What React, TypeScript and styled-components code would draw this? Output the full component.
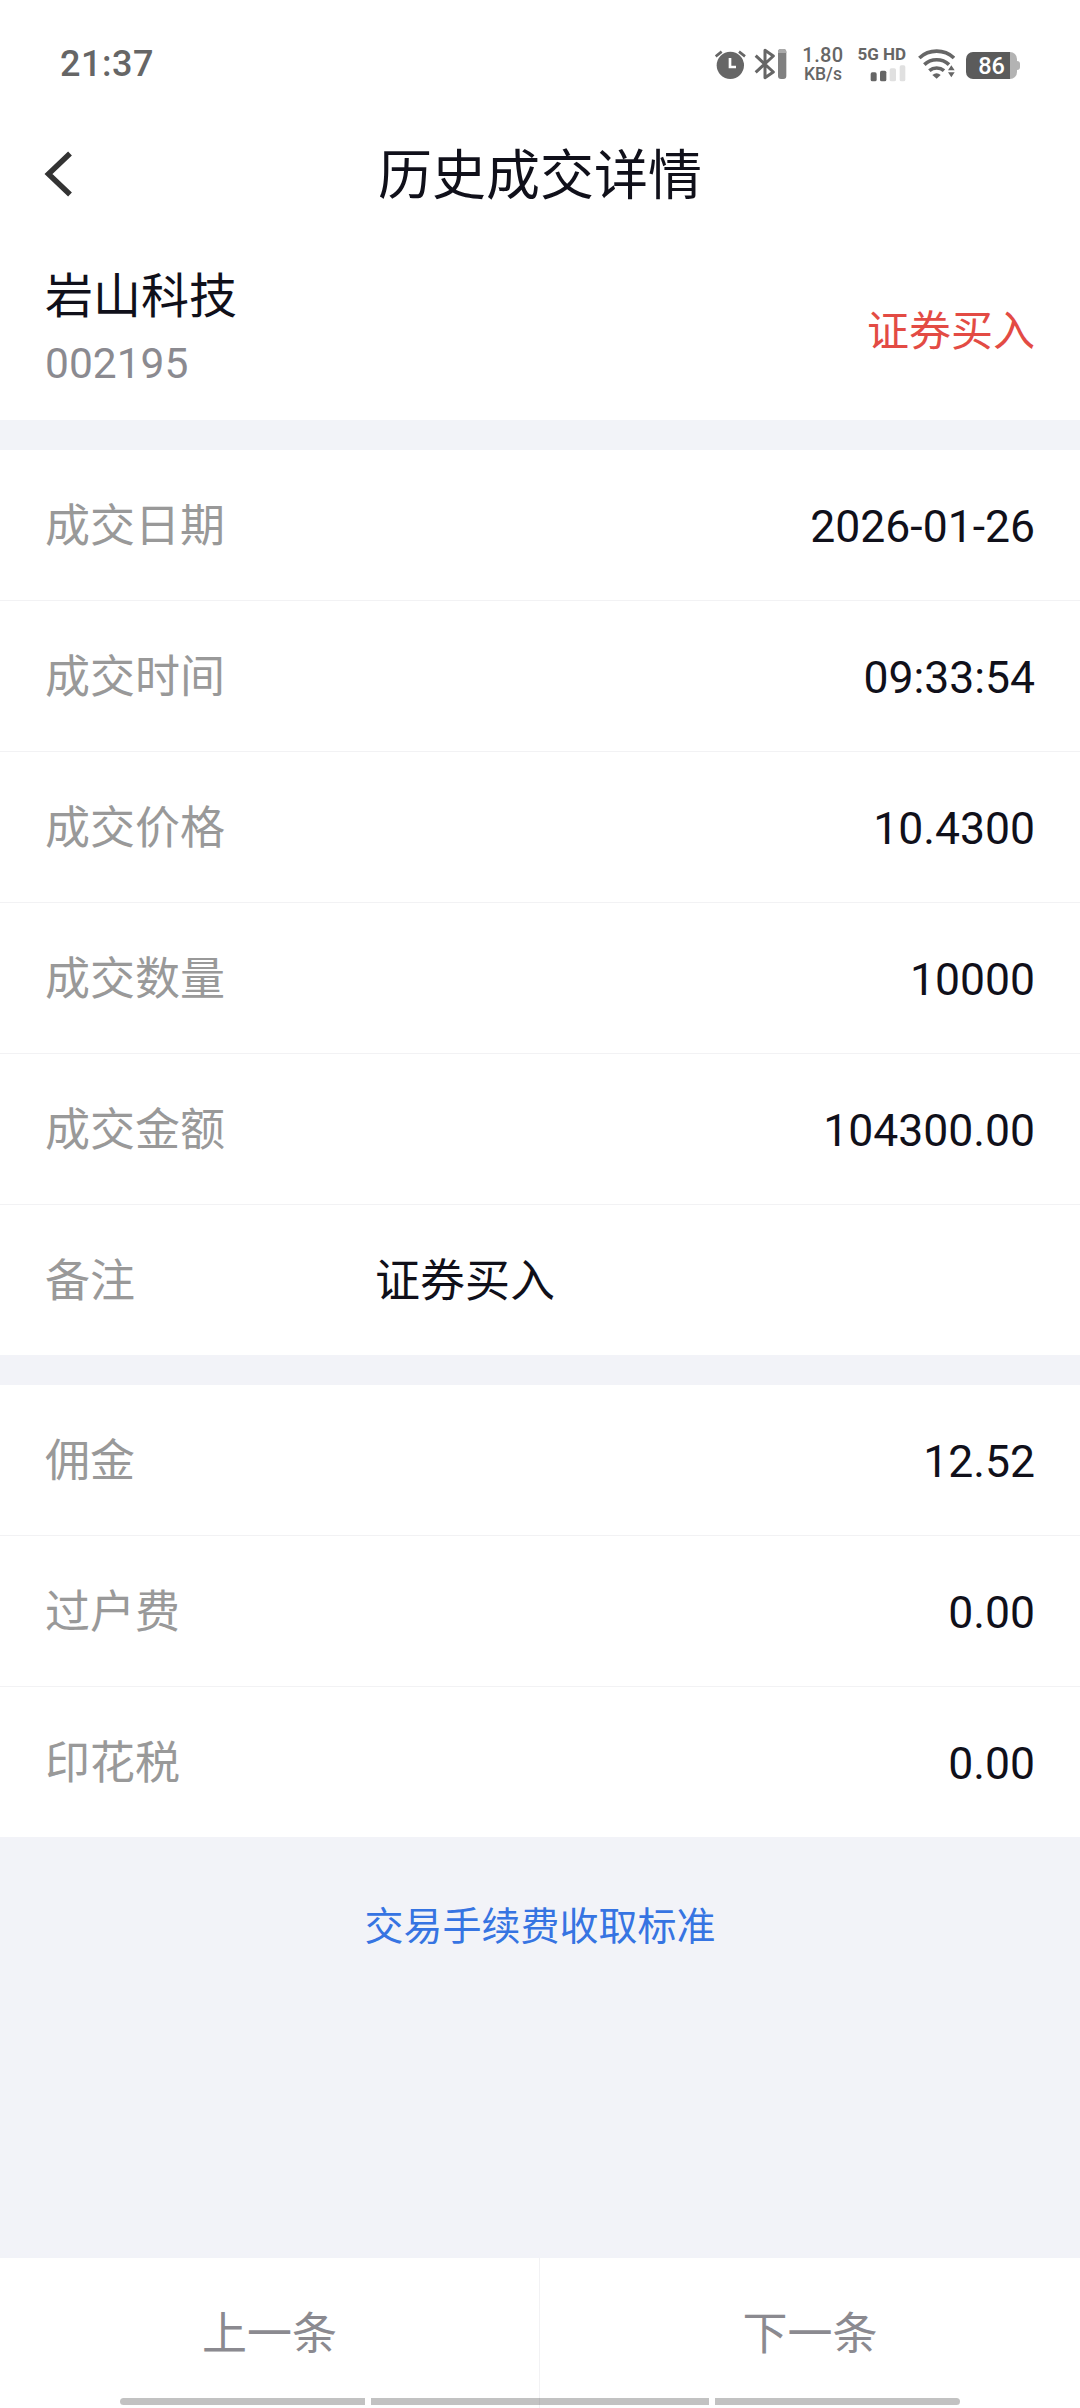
import React from "react";
import styled, { createGlobalStyle } from "styled-components";

const GlobalStyle = createGlobalStyle`
  body {
    margin: 0;
    background: #f2f3f8;
    font-family: Roboto, "Noto Sans CJK SC", sans-serif;
    color: #10101a;
  }
  * { box-sizing: border-box; }
`;

const Screen = styled.div`
  position: relative;
  display: flex;
  flex-direction: column;
  width: 1080px;
  height: 2408px;
  background: #f2f3f8;
  overflow: hidden;
`;

const StatusBar = styled.div`
  display: flex;
  justify-content: space-between;
  align-items: center;
  height: 128px;
  padding: 0 60px;
  background: #fff;
  color: #666;
`;

const Clock = styled.span`
  font-size: 36px;
  font-weight: 500;
  line-height: 42px;
  letter-spacing: 0.5px;
`;

const StatusIcons = styled.div`
  display: flex;
  align-items: center;
  height: 36px;
`;

const Glyph = styled.svg<{ $gap?: number }>`
  display: block;
  flex: none;
  margin-right: ${(p) => p.$gap ?? 0}px;
`;

const NetSpeed = styled.div`
  display: flex;
  flex-direction: column;
  align-items: center;
  width: 42px;
  margin-right: 14px;
  font-weight: 500;
`;

const SpeedValue = styled.span`
  font-size: 20px;
  line-height: 18px;
  letter-spacing: 0.4px;
`;

const SpeedUnit = styled.span`
  padding-top: 1px;
  font-size: 17.5px;
  line-height: 18px;
`;

const Signal = styled.div`
  display: flex;
  flex-direction: column;
  justify-content: space-between;
  align-items: flex-end;
  width: 48px;
  height: 35px;
  margin-right: 12px;
`;

const SignalLabel = styled.span`
  font-size: 17px;
  font-weight: 700;
  line-height: 15px;
  white-space: nowrap;
`;

const Battery = styled.div`
  position: relative;
  display: flex;
  align-items: center;
  justify-content: center;
  width: 51px;
  height: 27px;
  margin: 2px 3px 0 0;
  padding-top: 2px;
  border-radius: 7px;
  background: linear-gradient(90deg, #5b5b5b 44px, #b3b3b3 44px);
  color: #fff;
  font-size: 23.5px;
  font-weight: 500;
  line-height: 25px;

  &::after {
    content: "";
    position: absolute;
    left: 51px;
    top: 9px;
    width: 3px;
    height: 9px;
    border-radius: 0 3px 3px 0;
    background: #b3b3b3;
  }
`;

const Header = styled.header`
  display: grid;
  grid-template-columns: 120px 1fr 120px;
  align-items: center;
  height: 92px;
  background: #fff;
`;

const BackButton = styled.button`
  display: flex;
  padding: 0 0 0 43px;
  border: 0;
  background: none;
`;

const Title = styled.h1`
  margin: 0;
  padding-top: 6px;
  text-align: center;
  font-size: 54px;
  font-weight: 400;
  line-height: 80px;
`;

const Summary = styled.section`
  display: flex;
  justify-content: space-between;
  align-items: center;
  height: 200px;
  padding: 20px 45px 0;
  background: #fff;
`;

const Stock = styled.div`
  display: flex;
  flex-direction: column;
`;

const StockName = styled.span`
  font-size: 48px;
  line-height: 68px;
`;

const StockCode = styled.span`
  font-size: 42.5px;
  line-height: 66px;
  color: #8b8a90;
`;

const Side = styled.span`
  padding-top: 4px;
  font-size: 42px;
  line-height: 62px;
  color: #e34b44;
`;

const Panel = styled.section`
  margin-top: 30px;
  background: #fff;
`;

const Row = styled.div`
  display: flex;
  align-items: center;
  height: 151px;
  padding: 4px 45px 0;
  border-bottom: 1px solid #f2f2f4;
  font-size: 45px;
  line-height: 66px;

  &:last-child {
    height: 150px;
    border-bottom: 0;
  }
`;

const Label = styled.span`
  width: 330px;
  color: #999;
`;

const Value = styled.span<{ $left?: boolean }>`
  flex: 1;
  font-size: ${(p) => (p.$left ? 45 : 44.5)}px;
  text-align: ${(p) => (p.$left ? "left" : "right")};
`;

const FeeLink = styled.a`
  display: block;
  padding-top: 2px;
  text-align: center;
  font-size: 39px;
  line-height: 176px;
  color: #3674e2;
`;

const Pager = styled.nav`
  display: flex;
  height: 150px;
  margin-top: auto;
  background: #fff;
`;

const PagerButton = styled.button`
  flex: 0 0 540px;
  padding: 4px 0 0;
  border: 0;
  background: none;
  color: #8b8a90;
  font: 400 45px/66px Roboto, "Noto Sans CJK SC", sans-serif;

  &:first-child {
    border-right: 1px solid #f2f2f4;
  }
`;

const GestureBar = styled.div`
  position: absolute;
  left: 120px;
  bottom: 3px;
  display: grid;
  grid-template-columns: 245px 338px 245px;
  gap: 6px;
`;

const GestureSegment = styled.span`
  height: 7px;
  background: rgba(0, 0, 0, 0.24);

  &:first-child { border-radius: 4px 0 0 4px; }
  &:last-child { border-radius: 0 4px 4px 0; }
`;

const AlarmIcon = () => (
  <Glyph $gap={8} width="31" height="30" viewBox="42 57 93 90">
    <circle cx="88" cy="106" r="41" fill="#666" />
    <path d="M44 79L62 65M132 79L114 65" stroke="#666" strokeWidth="8" fill="none" />
    <path d="M87 84V111H105" stroke="#fff" strokeWidth="8" fill="none" />
  </Glyph>
);

const BluetoothIcon = () => (
  <Glyph $gap={15} width="33" height="32" viewBox="159 54 99 96">
    <path
      d="M164 77L217 126L192 143V61L217 78L164 127"
      stroke="#666"
      strokeWidth="9"
      strokeLinejoin="round"
      fill="none"
    />
    <rect x="231" y="57" width="25" height="90" rx="9" fill="#808080" />
    <path d="M231 69V66A9 9 0 0 1 240 57H247A9 9 0 0 1 256 66V69Z" fill="#aaa" />
  </Glyph>
);

const SignalBars = () => (
  <Glyph width="36" height="17" viewBox="508 101 108 51">
    <rect x="510" y="123" width="18" height="27" rx="5" fill="#666" />
    <rect x="538" y="118" width="19" height="32" rx="5" fill="#666" />
    <rect x="567" y="111" width="19" height="39" rx="5" fill="#e0e0e0" />
    <rect x="597" y="102" width="17" height="48" rx="5" fill="#e0e0e0" />
  </Glyph>
);

const WifiIcon = () => (
  <Glyph $gap={11} width="37" height="30" viewBox="653 59 111 90">
    <g stroke="#666" strokeWidth="11" fill="none">
      <path d="M657 86A76 76 0 0 1 761 86" />
      <path d="M672 106A54 54 0 0 1 746 106" />
      <path d="M687 124A34 34 0 0 1 731 124" />
    </g>
    <path d="M696 137Q709 127 721 137L709 148Z" fill="#666" />
    <path d="M743 123L753 108L763 123ZM743 129H763L753 144Z" fill="#666" />
  </Glyph>
);

const BackIcon = () => (
  <svg width="32" height="48" viewBox="0 0 32 48">
    <path d="M27 3.5L5.5 24L27 44.5" stroke="#333" strokeWidth="5.5" fill="none" />
  </svg>
);

type Detail = { label: string; value: string; left?: boolean };

const trade: Detail[] = [
  { label: "成交日期", value: "2026-01-26" },
  { label: "成交时间", value: "09:33:54" },
  { label: "成交价格", value: "10.4300" },
  { label: "成交数量", value: "10000" },
  { label: "成交金额", value: "104300.00" },
  { label: "备注", value: "证券买入", left: true },
];

const fees: Detail[] = [
  { label: "佣金", value: "12.52" },
  { label: "过户费", value: "0.00" },
  { label: "印花税", value: "0.00" },
];

const DetailPanel = ({ items }: { items: Detail[] }) => (
  <Panel>
    {items.map((item) => (
      <Row key={item.label}>
        <Label>{item.label}</Label>
        <Value $left={item.left}>{item.value}</Value>
      </Row>
    ))}
  </Panel>
);

export default function App() {
  return (
    <Screen>
      <GlobalStyle />
      <StatusBar>
        <Clock>21:37</Clock>
        <StatusIcons>
          <AlarmIcon />
          <BluetoothIcon />
          <NetSpeed>
            <SpeedValue>1.80</SpeedValue>
            <SpeedUnit>KB/s</SpeedUnit>
          </NetSpeed>
          <Signal>
            <SignalLabel>5G HD</SignalLabel>
            <SignalBars />
          </Signal>
          <WifiIcon />
          <Battery>86</Battery>
        </StatusIcons>
      </StatusBar>
      <Header>
        <BackButton aria-label="返回">
          <BackIcon />
        </BackButton>
        <Title>历史成交详情</Title>
      </Header>
      <Summary>
        <Stock>
          <StockName>岩山科技</StockName>
          <StockCode>002195</StockCode>
        </Stock>
        <Side>证券买入</Side>
      </Summary>
      <DetailPanel items={trade} />
      <DetailPanel items={fees} />
      <FeeLink>交易手续费收取标准</FeeLink>
      <Pager>
        <PagerButton>上一条</PagerButton>
        <PagerButton>下一条</PagerButton>
      </Pager>
      <GestureBar>
        <GestureSegment />
        <GestureSegment />
        <GestureSegment />
      </GestureBar>
    </Screen>
  );
}
